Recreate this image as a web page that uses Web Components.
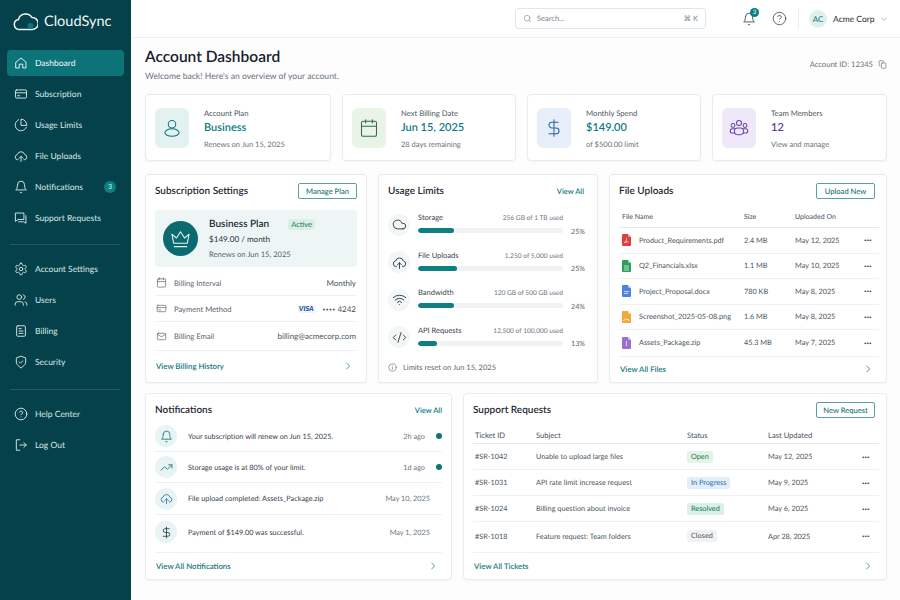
<!DOCTYPE html>
<html lang="en">
<head>
<meta charset="utf-8">
<title>CloudSync</title>
<style>
  html, body { margin: 0; height: 100%; }
  body { font-family: "Lato", "Noto Sans", sans-serif; color: #1f2933; background: #fdfdfe; overflow: hidden; text-rendering: geometricPrecision; }
</style>
</head>
<body>
<app-shell></app-shell>
<script>
// icon paths, 24x24 stroke icons
const ICONS = {
  home: '<path d="M3.5 10.5 12 3.5l8.5 7v10h-5.5v-6.5h-6v6.5H3.5z"/>',
  card: '<rect x="2.5" y="5" width="19" height="14" rx="2"/><path d="M2.5 10h19M6 15h4"/>',
  pie: '<path d="M21.2 15.9A10 10 0 1 1 8 2.8"/><path d="M22 12A10 10 0 0 0 12 2v10z"/>',
  upload: '<path d="M7 18.5h-.5a4.5 4.5 0 0 1-.8-8.9 6.5 6.5 0 0 1 12.6 0 4.5 4.5 0 0 1-.8 8.9H17"/><path d="M12 12.5v9M8.5 16l3.5-3.5 3.5 3.5"/>',
  bell: '<path d="M6 8a6 6 0 0 1 12 0c0 7 3 9 3 9H3s3-2 3-9"/><path d="M10.3 21a1.94 1.94 0 0 0 3.4 0"/>',
  support: '<path d="M3 3.5h14v11H7l-4 3z"/><path d="M20.5 8v13l-4-2.5H8"/>',
  gear: '<path d="M12.22 2h-.44a2 2 0 0 0-2 2v.18a2 2 0 0 1-1 1.73l-.43.25a2 2 0 0 1-2 0l-.15-.08a2 2 0 0 0-2.73.73l-.22.38a2 2 0 0 0 .73 2.73l.15.1a2 2 0 0 1 1 1.72v.51a2 2 0 0 1-1 1.74l-.15.09a2 2 0 0 0-.73 2.73l.22.38a2 2 0 0 0 2.73.73l.15-.08a2 2 0 0 1 2 0l.43.25a2 2 0 0 1 1 1.73V20a2 2 0 0 0 2 2h.44a2 2 0 0 0 2-2v-.18a2 2 0 0 1 1-1.73l.43-.25a2 2 0 0 1 2 0l.15.08a2 2 0 0 0 2.73-.73l.22-.39a2 2 0 0 0-.73-2.73l-.15-.08a2 2 0 0 1-1-1.74v-.5a2 2 0 0 1 1-1.74l.15-.09a2 2 0 0 0 .73-2.73l-.22-.38a2 2 0 0 0-2.73-.73l-.15.08a2 2 0 0 1-2 0l-.43-.25a2 2 0 0 1-1-1.73V4a2 2 0 0 0-2-2z"/><circle cx="12" cy="12" r="3"/>',
  users: '<path d="M16 21v-2a4 4 0 0 0-4-4H6a4 4 0 0 0-4 4v2"/><circle cx="9" cy="7" r="4"/><path d="M22 21v-2a4 4 0 0 0-3-3.87M16 3.13a4 4 0 0 1 0 7.75"/>',
  doc: '<rect x="4.5" y="3" width="15" height="18" rx="2"/><path d="M8.5 8h4M8.5 12h7M8.5 16h7"/>',
  shield: '<path d="M12 22s8-4 8-10V5l-8-3-8 3v7c0 6 8 10 8 10"/><path d="m9 12 2 2 4-4"/>',
  help: '<circle cx="12" cy="12" r="10"/><path d="M9.09 9a3 3 0 0 1 5.83 1c0 2-3 3-3 3M12 17h.01"/>',
  logout: '<path d="M10 3H4v18h6M10 12h11M17 8l4 4-4 4"/>',
  search: '<circle cx="11" cy="11" r="7.5"/><path d="m21 21-4.5-4.5"/>',
  user: '<circle cx="12" cy="7.5" r="4.5"/><ellipse cx="12" cy="17.5" rx="8.5" ry="4.5"/>',
  calendar: '<rect x="3" y="4" width="18" height="18" rx="2"/><path d="M16 2v4M8 2v4M3 10h18"/>',
  dollar: '<path d="M12 2v20M17 5H9.5a3.5 3.5 0 0 0 0 7h5a3.5 3.5 0 0 1 0 7H6"/>',
  team: '<circle cx="12" cy="6" r="3"/><circle cx="4.8" cy="9" r="2.3"/><circle cx="19.2" cy="9" r="2.3"/><rect x="6.5" y="12" width="11" height="8" rx="4"/><path d="M6.5 18H4a2.5 2.5 0 0 1-2.5-2.5c0-1.5 1-2.5 2.5-2.5h2.8M17.5 18H20a2.5 2.5 0 0 0 2.5-2.5c0-1.5-1-2.5-2.5-2.5h-2.800"/>',
  crown: '<path d="M3 7.5 7.8 11.5 12 5l4.2 6.5L21 7.5 19 17H5z"/><path d="M5.5 20.5h13"/>',
  mail: '<rect x="3" y="5" width="18" height="14" rx="2"/><path d="m3 7 9 6 9-6"/>',
  cloud: '<path d="M17.5 19H9a7 7 0 1 1 6.71-9h1.79a4.5 4.5 0 1 1 0 9Z"/>',
  wifi: '<path d="M12 20h.01M2 8.82a15 15 0 0 1 20 0M5 12.86a10 10 0 0 1 14 0M8.5 16.43a5 5 0 0 1 7 0"/>',
  code: '<path d="m18 16 4-4-4-4M6 8l-4 4 4 4M14.5 4l-5 16"/>',
  info: '<circle cx="12" cy="12" r="10"/><path d="M12 16.5v-5M12 7.5h.01"/>',
  trend: '<path d="m22 7-8.5 8.5-5-5L2 17"/><path d="M16 7h6v6"/>',
  copy: '<rect x="9" y="8" width="12" height="14" rx="2"/><path d="M5 16h-.5A2 2 0 0 1 3 14V4a2 2 0 0 1 2-2h8a2 2 0 0 1 2 2v1"/>',
  right: '<path d="m9 5 7 7-7 7"/>',
  down: '<path d="m5 9 7 7 7-7"/>'
};

const icon = (name, size, width = 1.8) =>
  `<svg width="${size}" height="${size}" viewBox="0 0 24 24" fill="none" stroke="currentColor" stroke-width="${width}" stroke-linecap="round" stroke-linejoin="round" style="display:block;flex:none">${ICONS[name]}</svg>`;

const fileIcon = (color, inner) =>
  `<svg width="9" height="12" viewBox="0 0 9 12" style="display:block;flex:none"><path d="M1 0h5l3 3v8a1 1 0 0 1-1 1H1a1 1 0 0 1-1-1V1a1 1 0 0 1 1-1z" fill="${color}"/><path d="M6 0l3 3H6z" fill="#fff" opacity=".45"/>${inner}</svg>`;

class AppShell extends HTMLElement {
  connectedCallback() {
    this.attachShadow({ mode: "open" }).innerHTML = `
      <style>
        :host { display: flex; width: 900px; height: 600px; overflow: hidden; }
        .main { flex: 1; min-width: 0; display: flex; flex-direction: column; }
        .content { padding: 10px 13px 0 14px; display: flex; flex-direction: column; }
        .row { display: grid; }
        .stats { grid-template-columns: 186px 174px 174px 175px; gap: 11px; margin-bottom: 13px; }
        .mid { grid-template-columns: 222px 220px 278px; gap: 11px; margin-bottom: 11px; height: 208px; }
        .low { grid-template-columns: 307px 424px; gap: 11px; height: 187px; }
      </style>
      <side-bar></side-bar>
      <div class="main">
        <top-bar></top-bar>
        <div class="content">
          <page-head></page-head>
          <div class="row stats">
            <stat-card icon="user" tone="teal" label="Account Plan" value="Business" note="Renews on Jun 15, 2025"></stat-card>
            <stat-card icon="calendar" tone="green" label="Next Billing Date" value="Jun 15, 2025" note="28 days remaining"></stat-card>
            <stat-card icon="dollar" tone="blue" label="Monthly Spend" value="$149.00" note="of $500.00 limit"></stat-card>
            <stat-card icon="team" tone="purple" label="Team Members" value="12" note="View and manage"></stat-card>
          </div>
          <div class="row mid">
            <subscription-panel></subscription-panel>
            <usage-panel></usage-panel>
            <files-panel></files-panel>
          </div>
          <div class="row low">
            <notifications-panel></notifications-panel>
            <tickets-panel></tickets-panel>
          </div>
        </div>
      </div>`;
  }
}

class SideBar extends HTMLElement {
  connectedCallback() {
    const item = (ic, label, extra = "") => `<a class="item ${extra}">${icon(ic, 14, 1.6)}<span>${label}</span>${label === "Notifications" ? '<b>3</b>' : ""}</a>`;
    this.attachShadow({ mode: "open" }).innerHTML = `
      <style>
        :host { display: flex; flex-direction: column; flex: none; width: 131px; height: 600px; background: #04414a; color: #d9e8e9; box-sizing: border-box; }
        .logo { display: flex; align-items: center; gap: 6px; height: 42px; padding: 0 0 0 13px; margin-bottom: 7.5px; color: #f2f8f8; font-size: 14.5px; font-weight: 400; }
        nav { display: flex; flex-direction: column; gap: 5px; padding: 0 7px; }
        .item { display: flex; align-items: center; height: 26px; padding: 0 8px 0 7px; gap: 7px; font-size: 8.5px; border-radius: 4px; }
        .item.on { background: #0c7378; color: #f0f8f8; }
        .item b { margin-left: auto; width: 12px; height: 12px; border-radius: 50%; background: #0d7f82; font-size: 7px; font-weight: 400; display: grid; place-items: center; }
        hr { border: 0; border-top: 1px solid rgba(255,255,255,.13); margin: 8.5px 3px 6px; width: 110px; }
      </style>
      <div class="logo">
        <svg width="25" height="20" viewBox="0 0 25 20" fill="none" stroke="currentColor" stroke-width="1.5" stroke-linecap="round" style="display:block;flex:none"><path d="M9 18.5H6a5 5 0 0 1-.6-9.9A7.5 7.5 0 0 1 19 6.5a5.8 5.8 0 0 1 .5 12H9z"/><circle cx="17.5" cy="15" r="3" fill="#0c7378" stroke="none"/></svg>
        <span>CloudSync</span>
      </div>
      <nav>
        ${item("home", "Dashboard", "on")}
        ${item("card", "Subscription")}
        ${item("pie", "Usage Limits")}
        ${item("upload", "File Uploads")}
        ${item("bell", "Notifications")}
        ${item("support", "Support Requests")}
        <hr>
        ${item("gear", "Account Settings")}
        ${item("users", "Users")}
        ${item("doc", "Billing")}
        ${item("shield", "Security")}
        <hr>
        ${item("help", "Help Center")}
        ${item("logout", "Log Out")}
      </nav>`;
  }
}

class TopBar extends HTMLElement {
  connectedCallback() {
    this.attachShadow({ mode: "open" }).innerHTML = `
      <style>
        :host { display: flex; align-items: center; height: 37px; flex: none; background: #fff; border-bottom: 1px solid #eceef0; padding-left: 384px; color: #4b5563; }
        .search { width: 191px; height: 21px; box-sizing: border-box; border: 1px solid #e3e6e9; border-radius: 3px; display: flex; align-items: center; gap: 5px; padding: 0 7px; font-size: 7.5px; color: #7b8590; }
        .search kbd { margin-left: auto; font: inherit; font-size: 7.5px; }
        .bell { position: relative; margin-left: 36px; color: #3f4a55; }
        .bell b { position: absolute; top: -4px; right: -3px; width: 9px; height: 9px; border-radius: 50%; background: #0d7f82; color: #fff; font-size: 6px; font-weight: 400; display: grid; place-items: center; }
        .help { margin-left: 16px; color: #3f4a55; }
        .sep { width: 1px; height: 20px; background: #eceef0; margin: 0 10px 0 11px; }
        .av { width: 18px; height: 18px; border-radius: 50%; background: #dff0ef; color: #0f6f73; font-size: 8px; display: grid; place-items: center; }
        .name { margin-left: 6px; font-size: 8.5px; color: #1f2933; }
        .chev { margin-left: 5px; color: #6b7280; }
      </style>
      <div class="search">${icon("search", 9, 1.6)}<span>Search...</span><kbd>⌘ K</kbd></div>
      <div class="bell">${icon("bell", 14, 1.5)}<b>3</b></div>
      <div class="help">${icon("help", 15, 1.3)}</div>
      <div class="sep"></div>
      <div class="av">AC</div>
      <span class="name">Acme Corp</span>
      <span class="chev">${icon("down", 8, 1.5)}</span>`;
  }
}

class PageHead extends HTMLElement {
  connectedCallback() {
    this.attachShadow({ mode: "open" }).innerHTML = `
      <style>
        :host { display: flex; align-items: flex-start; justify-content: space-between; height: 46px; box-sizing: border-box; }
        h1 { margin: -1px 0 0; font-size: 15.5px; line-height: 20px; font-weight: 600; color: #17212b; }
        p { margin: 3px 0 0; font-size: 8.6px; line-height: 12px; color: #6b7480; }
        .id { display: flex; align-items: center; gap: 5px; margin-top: 11px; font-size: 7.6px; color: #69727d; }
      </style>
      <div><h1>Account Dashboard</h1><p>Welcome back! Here's an overview of your account.</p></div>
      <div class="id"><span>Account ID: 12345</span>${icon("copy", 9, 1.8)}</div>`;
  }
}

class StatCard extends HTMLElement {
  connectedCallback() {
    const tones = {
      teal: ["#e3f1f0", "#0f7378", "#0f7c80"],
      green: ["#e9f3e6", "#2f6b4f", "#0f7c80"],
      blue: ["#e6eef9", "#2f62a8", "#0f7c80"],
      purple: ["#eee8f8", "#6b46a8", "#5b3a96"]
    };
    const [bg, fg, val] = tones[this.getAttribute("tone")];
    this.attachShadow({ mode: "open" }).innerHTML = `
      <style>
        :host { display: flex; align-items: center; height: 67px; box-sizing: border-box; background: #fff; border: 1px solid #e9ebee; border-radius: 4px; box-shadow: 0 1px 2px rgba(20,30,40,.04); padding: 0 9px; gap: 15px; }
        .ic { width: 34px; height: 40px; border-radius: 6px; background: ${bg}; color: ${fg}; display: grid; place-items: center; flex: none; }
        .tx { padding-top: 2px; }
        .label { font-size: 7.7px; line-height: 10px; color: #4b5560; }
        .value { font-size: 11px; line-height: 16px; font-weight: 600; color: ${val}; margin: 2px 0 4px; }
        .note { font-size: 7.5px; line-height: 10px; color: #6b7480; }
      </style>
      <div class="ic">${icon(this.getAttribute("icon"), 20, 1.25)}</div>
      <div class="tx">
        <div class="label">${this.getAttribute("label")}</div>
        <div class="value">${this.getAttribute("value")}</div>
        <div class="note">${this.getAttribute("note")}</div>
      </div>`;
  }
}

// shared card frame: title, action and footer link
class PanelCard extends HTMLElement {
  connectedCallback() {
    const action = this.getAttribute("action");
    const link = this.getAttribute("link");
    const footer = this.getAttribute("footer");
    this.attachShadow({ mode: "open" }).innerHTML = `
      <style>
        :host { display: flex; flex-direction: column; box-sizing: border-box; height: 100%; background: #fff; border: 1px solid #e9ebee; border-radius: 4px; box-shadow: 0 1px 2px rgba(20,30,40,.04); padding: 0 var(--pad-r, 9px) 0 9px; }
        header { display: flex; align-items: center; justify-content: space-between; height: 32px; flex: none; }
        h2 { margin: 0; font-size: 10px; font-weight: 600; color: #1f2933; }
        .btn { width: 59px; height: 16px; box-sizing: border-box; display: flex; align-items: center; justify-content: center; border: 1px solid #5a9fa2; border-radius: 2px; font-size: 7.6px; color: #0f6f73; font-weight: 500; margin-right: var(--btn-gap, 0); }
        .lnk { font-size: 7.5px; color: #0f7c80; font-weight: 600; margin-right: var(--lnk-gap, 0); }
        footer { display: flex; align-items: center; justify-content: space-between; height: var(--foot-h, 26px); flex: none; font-size: 7.8px; font-weight: 600; border-top: 1px solid #f0f1f3; box-sizing: border-box; padding: 0 var(--foot-r, 4px) 0 1px; color: #16797c; }
      </style>
      <header>
        <h2>${this.getAttribute("heading")}</h2>
        ${action ? `<span class="btn">${action}</span>` : ""}${link ? `<span class="lnk">${link}</span>` : ""}
      </header>
      <div class="body"><slot></slot></div>
      ${footer ? `<footer><span>${footer}</span>${icon("right", 10, 1.8)}</footer>` : ""}`;
  }
}

class SubscriptionPanel extends HTMLElement {
  connectedCallback() {
    const row = (ic, label, value) => `<div class="row">${icon(ic, 11, 1.5)}<span class="k">${label}</span><span class="v">${value}</span></div>`;
    this.attachShadow({ mode: "open" }).innerHTML = `
      <style>
        :host { display: block; height: 100%; }
        panel-card { --foot-h: 30px; }
        .plan { display: flex; align-items: center; height: 57px; margin: 3px 0; background: #edf6f5; border-radius: 3px; padding-left: 8px; box-sizing: border-box; gap: 11px; }
        .coin { width: 35px; height: 35px; border-radius: 50%; background: #0b6a70; color: #e8f5f4; display: grid; place-items: center; flex: none; }
        .nm { display: flex; align-items: center; font-size: 10px; font-weight: 600; color: #1f2933; line-height: 14px; }
        .nm i { margin-left: 19px; font-style: normal; font-size: 7.5px; font-weight: 400; color: #11795a; background: #dcefe6; border-radius: 3px; padding: 1px 3px; line-height: 9px; }
        .pr { font-size: 8.1px; line-height: 13px; margin-top: 2px; color: #27323d; }
        .ren { font-size: 7.6px; line-height: 11px; margin-top: 3px; color: #5a6470; }
        .row { display: flex; align-items: center; height: 26px; border-bottom: 1px solid #f0f1f3; box-sizing: border-box; color: #5a6470; font-size: 7.6px; gap: 7px; padding: 0 1px; }
        .row:last-child { border-bottom: 0; height: 28px; }
        .v { margin-left: auto; color: #4b5560; display: flex; align-items: center; gap: 8px; font-size: 8px; }
        .visa { font-style: italic; font-weight: 900; color: #1f4f96; font-size: 7px; background: #f1f4fa; padding: 0 1px; }
        .mask { font-size: 5px; letter-spacing: .3px; vertical-align: 1px; }
      </style>
      <panel-card heading="Subscription Settings" action="Manage Plan" footer="View Billing History">
        <div class="plan">
          <div class="coin">${icon("crown", 23, 1.1)}</div>
          <div>
            <div class="nm">Business Plan<i>Active</i></div>
            <div class="pr">$149.00 / month</div>
            <div class="ren">Renews on Jun 15, 2025</div>
          </div>
        </div>
        ${row("calendar", "Billing Interval", "Monthly")}
        ${row("card", "Payment Method", '<span class="visa">VISA</span><span><span class="mask">••••</span> 4242</span>')}
        ${row("mail", "Billing Email", "billing@acmecorp.com")}
      </panel-card>`;
  }
}

class UsagePanel extends HTMLElement {
  connectedCallback() {
    const meter = (ic, name, used, pct, fill) => `
      <div class="m">
        <div class="dot">${icon(ic, 15, 1.4)}</div>
        <div class="mid">
          <div class="t"><span>${name}</span><small>${used}</small></div>
          <div class="bar"><div style="width:${fill}%"></div></div>
        </div>
        <span class="pct">${pct}</span>
      </div>`;
    this.attachShadow({ mode: "open" }).innerHTML = `
      <style>
        :host { display: block; height: 100%; }
        panel-card { --lnk-gap: 4px; }
        .list { display: flex; flex-direction: column; margin-top: -1px; }
        .m { display: flex; align-items: center; height: 37.5px; gap: 8px; }
        .dot { width: 22px; height: 22px; border-radius: 50%; background: #f2f6f7; color: #27323d; display: grid; place-items: center; flex: none; }
        .mid { width: 145px; margin-top: -3px; }
        .t { display: flex; justify-content: space-between; align-items: baseline; font-size: 7.5px; color: #37424d; line-height: 10px; margin-bottom: 5px; }
        .t small { font-size: 6.6px; color: #6b7480; }
        .bar { height: 5px; border-radius: 3px; background: #f0f2f3; overflow: hidden; }
        .bar div { height: 100%; border-radius: 3px; background: #0e7f83; }
        .pct { font-size: 7.2px; color: #5a6470; margin-top: 13px; }
        .foot { display: flex; align-items: center; gap: 6px; height: 22px; font-size: 7.5px; color: #5f6975; }
      </style>
      <panel-card heading="Usage Limits" link="View All">
        <div class="list">
          ${meter("cloud", "Storage", "256 GB of 1 TB used", "25%", 25)}
          ${meter("upload", "File Uploads", "1,250 of 5,000 used", "25%", 27)}
          ${meter("wifi", "Bandwidth", "120 GB of 500 GB used", "24%", 25)}
          ${meter("code", "API Requests", "12,500 of 100,000 used", "13%", 13)}
        </div>
        <div class="foot">${icon("info", 9, 1.6)}<span>Limits reset on Jun 15, 2025</span></div>
      </panel-card>`;
  }
}

class FilesPanel extends HTMLElement {
  connectedCallback() {
    const white = d => `<path d="${d}" stroke="#fff" stroke-width=".8" fill="none" opacity=".85"/>`;
    const files = [
      ["#e23d3d", white("M2 9c2-1 3-3 2.5-5M2.5 8h4"), "Product_Requirements.pdf", "2.4 MB", "May 12, 2025"],
      ["#2e9e5b", white("M2 6h5M2 8h5M2 10h5"), "Q2_Financials.xlsx", "1.1 MB", "May 10, 2025"],
      ["#4a84e0", white("M2 6.5h5M2 8.5h4"), "Project_Proposal.docx", "780 KB", "May 8, 2025"],
      ["#f2a93b", white("M1.5 10l2-2.5 1.5 1.5 1-1 1.5 2"), "Screenshot_2025-05-08.png", "1.6 MB", "May 8, 2025"],
      ["#9a6fd0", white("M4.5 4v5"), "Assets_Package.zip", "45.3 MB", "May 7, 2025"]
    ];
    this.attachShadow({ mode: "open" }).innerHTML = `
      <style>
        :host { display: block; height: 100%; }
        panel-card { --pad-r: 7px; --btn-gap: 4px; --foot-r: 6px; }
        .r { display: grid; grid-template-columns: 122px 51px 69px 1fr; align-items: center; height: 25.5px; border-bottom: 1px solid #f0f1f3; box-sizing: border-box; font-size: 7.3px; color: #4b5560; padding-left: 3px; }
        .r.h { height: 21px; border-bottom-color: #e7e9ec; font-size: 7px; color: #46505b; }
        .r:last-child { border-bottom: 0; }
        .n { display: flex; align-items: center; gap: 8px; white-space: nowrap; }
        .dots { font-size: 9px; color: #4b5560; font-weight: 700; line-height: 8px; }
      </style>
      <panel-card heading="File Uploads" action="Upload New" footer="View All Files">
        <div class="r h"><span>File Name</span><span>Size</span><span>Uploaded On</span><span></span></div>
        ${files.map(f => `<div class="r"><span class="n">${fileIcon(f[0], f[1])}${f[2]}</span><span>${f[3]}</span><span>${f[4]}</span><span class="dots">···</span></div>`).join("")}
      </panel-card>`;
  }
}

class NotificationsPanel extends HTMLElement {
  connectedCallback() {
    const row = (ic, color, text, when, unread) => `
      <div class="r">
        <div class="dot" style="color:${color}">${icon(ic, 13, 1.5)}</div>
        <span class="tx">${text}</span>
        <span class="w ${unread ? "" : "old"}">${when}</span>
        ${unread ? '<i></i>' : ""}
      </div>`;
    this.attachShadow({ mode: "open" }).innerHTML = `
      <style>
        :host { display: block; height: 100%; }
        .list { margin-top: -5px; }
        .r { display: flex; align-items: center; height: 31px; border-bottom: 1px solid #f0f1f3; box-sizing: border-box; font-size: 7.3px; color: #37424d; }
        .r:nth-child(3) { height: 32px; }
        .r:last-child { border-bottom: 0; height: 37px; padding-bottom: 3px; }
        .dot { width: 22px; height: 22px; border-radius: 50%; background: #e8f3f3; display: grid; place-items: center; flex: none; margin-right: 11px; }
        .w { margin-left: auto; color: #6b7480; }
        .w.old { margin-right: 12px; }
        i { width: 6px; height: 6px; border-radius: 50%; background: #0e7377; margin-left: 11px; }
      </style>
      <panel-card heading="Notifications" link="View All" footer="View All Notifications">
        <div class="list">
          ${row("bell", "#0f6f73", "Your subscription will renew on Jun 15, 2025.", "2h ago", true)}
          ${row("trend", "#0f6f73", "Storage usage is at 80% of your limit.", "1d ago", true)}
          ${row("upload", "#2f6fa8", "File upload completed: Assets_Package.zip", "May 10, 2025", false)}
          ${row("dollar", "#1f3a44", "Payment of $149.00 was successful.", "May 1, 2025", false)}
        </div>
      </panel-card>`;
  }
}

class TicketsPanel extends HTMLElement {
  connectedCallback() {
    const tickets = [
      ["#SR-1042", "Unable to upload large files", "Open", "open", "May 12, 2025"],
      ["#SR-1031", "API rate limit increase request", "In Progress", "prog", "May 9, 2025"],
      ["#SR-1024", "Billing question about invoice", "Resolved", "done", "May 6, 2025"],
      ["#SR-1018", "Feature request: Team folders", "Closed", "shut", "Apr 28, 2025"]
    ];
    this.attachShadow({ mode: "open" }).innerHTML = `
      <style>
        :host { display: block; height: 100%; }
        panel-card { --pad-r: 7px; --btn-gap: 4px; --foot-r: 6px; }
        .r { display: grid; grid-template-columns: 61px 151px 81px 94px 1fr; align-items: center; height: 26px; border-bottom: 1px solid #f0f1f3; box-sizing: border-box; font-size: 7.3px; color: #4b5560; padding-left: 2px; }
        .r.h { height: 18px; border-bottom-color: #e7e9ec; color: #46505b; font-size: 7.6px; }
        .r:last-child { border-bottom: 0; height: 30px; padding-bottom: 2px; }
        .s { justify-self: start; padding: 0 4px; line-height: 12px; border-radius: 2px; }
        .open { background: #e3f3e5; color: #23794a; }
        .prog { background: #e3eefb; color: #2a6bb0; }
        .done { background: #d9f1e6; color: #12775a; }
        .shut { background: #f1f2f4; color: #4b5560; }
        .dots { font-size: 9px; font-weight: 700; line-height: 8px; }
      </style>
      <panel-card heading="Support Requests" action="New Request" footer="View All Tickets">
        <div class="r h"><span>Ticket ID</span><span>Subject</span><span>Status</span><span>Last Updated</span><span></span></div>
        ${tickets.map(t => `<div class="r"><span>${t[0]}</span><span>${t[1]}</span><span class="s ${t[3]}">${t[2]}</span><span>${t[4]}</span><span class="dots">···</span></div>`).join("")}
      </panel-card>`;
  }
}

customElements.define("app-shell", AppShell);
customElements.define("side-bar", SideBar);
customElements.define("top-bar", TopBar);
customElements.define("page-head", PageHead);
customElements.define("stat-card", StatCard);
customElements.define("panel-card", PanelCard);
customElements.define("subscription-panel", SubscriptionPanel);
customElements.define("usage-panel", UsagePanel);
customElements.define("files-panel", FilesPanel);
customElements.define("notifications-panel", NotificationsPanel);
customElements.define("tickets-panel", TicketsPanel);
</script>
</body>
</html>
